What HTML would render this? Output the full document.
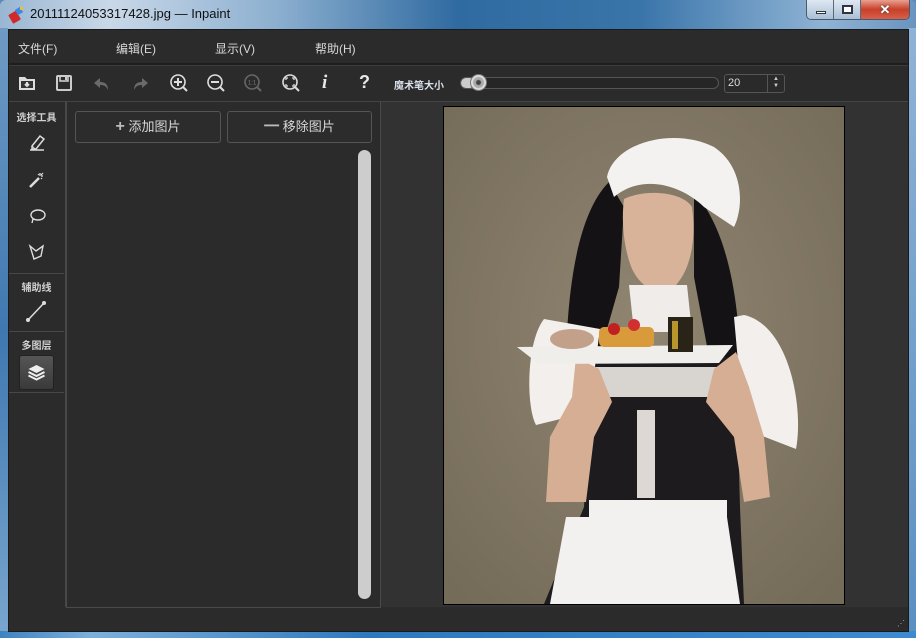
<!DOCTYPE html>
<html><head><meta charset="utf-8">
<style>
*{margin:0;padding:0;box-sizing:border-box}
body{width:916px;height:638px;overflow:hidden;background:#5a8ab8;font-family:"Liberation Sans","Noto Sans CJK SC",sans-serif;position:relative}
.abs{position:absolute}
#title{left:0;top:0;width:916px;height:30px;background:linear-gradient(90deg,#9ab6d2 0%,#c9d8e8 12%,#8db0d0 30%,#2f6aa0 50%,#3a75aa 70%,#8fb3d4 90%,#6a94bf 100%);border-radius:6px 6px 0 0}
#frameL{left:0;top:28px;width:8px;height:610px;background:linear-gradient(180deg,#6f9ac4,#3f78b0 50%,#7aa6cf)}
#frameR{right:0;top:28px;width:8px;height:610px;background:linear-gradient(180deg,#8fb3d6,#5a8fc2)}
#frameB{left:0;top:631px;width:916px;height:7px;background:linear-gradient(90deg,#3d82c0,#7db0dc 10%,#2d79be 40%,#3d8ad0)}
#main{left:8px;top:29px;width:901px;height:603px;background:#2b2b2b;border:1px solid #1a1a1a}
.menu{top:40px;color:#d8d8d8;font-size:12px}
.ico{top:73px;width:20px;height:20px}
.lbl{color:#d0d0d0;font-size:10px;font-weight:bold;left:8px;width:57px;text-align:center}
.sep{left:9px;width:55px;height:1px;background:#474747}
.btn{top:111px;height:32px;border:1px solid #555;border-radius:3px;background:#2c2c2c;color:#d8d8d8;font-size:13px;text-align:center;line-height:30px}
</style></head><body>
<div id="title" class="abs"></div>
<svg class="abs" style="left:8px;top:6px" width="18" height="18" viewBox="0 0 18 18"><rect x="2" y="6" width="9" height="10" rx="1" fill="#d02a2a" transform="rotate(-30 7 11)"/><rect x="8" y="2" width="6" height="6" fill="#3a8ae0" transform="rotate(-30 11 5)"/><rect x="12" y="1" width="3" height="3" fill="#f0c030"/></svg>
<div class="abs" style="left:30px;top:6px;font-size:13px;color:#111">20111124053317428.jpg — Inpaint</div>
<div class="abs" style="left:806px;top:0;width:104px;height:20px;border:1px solid #4a5a6a;border-top:none;border-radius:0 0 5px 5px;overflow:hidden;display:flex">
 <div style="width:27px;height:100%;background:linear-gradient(#dfe8f2,#a9bfd6);border-right:1px solid #5a6a7a;position:relative"><div style="position:absolute;left:9px;top:11px;width:10px;height:3px;background:#fff;border:1px solid #333"></div></div>
 <div style="width:27px;height:100%;background:linear-gradient(#dfe8f2,#a9bfd6);border-right:1px solid #5a6a7a;position:relative"><div style="position:absolute;left:8px;top:5px;width:11px;height:9px;border:2px solid #334;background:#fff"></div></div>
 <div style="flex:1;background:linear-gradient(#e8a090,#c8402a 50%,#d8604a);color:#fff;font-weight:bold;text-align:center;font-size:13px;line-height:19px;text-shadow:0 0 2px #333">✕</div>
</div>
<div id="frameL" class="abs"></div><div id="frameR" class="abs"></div><div id="frameB" class="abs"></div>
<div id="main" class="abs"></div>
<div class="abs menu" style="left:18px">文件(F)</div>
<div class="abs menu" style="left:116px">编辑(E)</div>
<div class="abs menu" style="left:215px">显示(V)</div>
<div class="abs menu" style="left:315px">帮助(H)</div>
<div class="abs" style="left:9px;top:63px;width:899px;height:2px;background:#1e1e1e"></div>
<div class="abs" style="left:9px;top:65px;width:899px;height:1px;background:#3c3c3c"></div>
<svg class="abs ico" style="left:17px" viewBox="0 0 20 20"><path d="M2 4h6l2 2h8v11H2z" fill="#ddd"/><rect x="4" y="8" width="12" height="7" fill="#333"/><path d="M10 9v4M8 11l2 2 2-2" stroke="#ddd" stroke-width="2" fill="none"/></svg>
<svg class="abs ico" style="left:54px" viewBox="0 0 20 20"><rect x="3" y="3" width="14" height="14" rx="1" fill="none" stroke="#ccc" stroke-width="2"/><rect x="6" y="3" width="8" height="5" fill="none" stroke="#ccc" stroke-width="1.6"/><rect x="11" y="4" width="2" height="3" fill="#ccc"/></svg>
<svg class="abs ico" style="left:92px" viewBox="0 0 20 20"><path d="M16 17c0-6-3-8-8-8V5L2 10l6 5v-3c4 0 6 1 8 5z" fill="#6a6a6a"/></svg>
<svg class="abs ico" style="left:130px" viewBox="0 0 20 20"><path d="M4 17c0-6 3-8 8-8V5l6 5-6 5v-3c-4 0-6 1-8 5z" fill="#6a6a6a"/></svg>
<svg class="abs ico" style="left:169px" viewBox="0 0 20 20"><circle cx="9" cy="9" r="7" fill="none" stroke="#ddd" stroke-width="1.6"/><path d="M14 14l4 4M9 5v8M5 9h8" stroke="#ddd" stroke-width="2"/></svg>
<svg class="abs ico" style="left:206px" viewBox="0 0 20 20"><circle cx="9" cy="9" r="7" fill="none" stroke="#ddd" stroke-width="1.6"/><path d="M14 14l4 4M5 9h8" stroke="#ddd" stroke-width="2"/></svg>
<svg class="abs ico" style="left:243px" viewBox="0 0 20 20"><circle cx="9" cy="9" r="7" fill="none" stroke="#666" stroke-width="1.6"/><path d="M14 14l4 4" stroke="#666" stroke-width="2"/><text x="9" y="11.5" font-size="6" fill="#777" text-anchor="middle" font-family="Liberation Sans">1:1</text></svg>
<svg class="abs ico" style="left:281px" viewBox="0 0 20 20"><circle cx="9" cy="9" r="7" fill="none" stroke="#ddd" stroke-width="1.6"/><path d="M14 14l4 4" stroke="#ddd" stroke-width="2"/><path d="M5 7V5h2M11 5h2v2M13 11v2h-2M7 13H5v-2" stroke="#ddd" stroke-width="1.3" fill="none"/></svg>
<div class="abs" style="left:322px;top:72px;font:italic bold 19px 'Liberation Serif',serif;color:#e8e8e8">i</div>
<div class="abs" style="left:359px;top:72px;font:bold 18px 'Liberation Sans',sans-serif;color:#e8e8e8">?</div>
<div class="abs" style="left:394px;top:77px;font-size:10px;font-weight:bold;color:#d8e0ea">魔术笔大小</div>
<div class="abs" style="left:460px;top:77px;width:259px;height:12px;border:1px solid #555;border-radius:6px;background:#262626"></div>
<div class="abs" style="left:461px;top:78px;width:14px;height:10px;border-radius:5px;background:#ccc"></div>
<div class="abs" style="left:470px;top:74px;width:17px;height:17px;border-radius:50%;background:radial-gradient(circle,#444 0 2px,#aaa 3px 5px,#ddd 6px);border:1px solid #777"></div>
<div class="abs" style="left:724px;top:74px;width:61px;height:19px;border:1px solid #555;border-radius:3px;background:#2a2a2a"></div>
<div class="abs" style="left:728px;top:77px;font-size:11px;color:#ddd">20</div>
<div class="abs" style="left:767px;top:75px;width:1px;height:17px;background:#555"></div>
<div class="abs" style="left:773px;top:76px;font-size:6px;color:#ccc;line-height:7px">▲<br>▼</div>
<div class="abs" style="left:9px;top:101px;width:899px;height:1px;background:#444"></div>
<div class="abs" style="left:65px;top:102px;width:1px;height:505px;background:#474747"></div>
<div class="abs lbl" style="top:109px">选择工具</div>
<svg class="abs" style="left:27px;top:132px" width="20" height="20" viewBox="0 0 20 20"><path d="M5 14l8-10 4 3-8 10H5z" fill="none" stroke="#ddd" stroke-width="1.5"/><path d="M5 14l3 3" stroke="#ddd"/><path d="M3 18h14" stroke="#ddd" stroke-width="1.5"/></svg>
<svg class="abs" style="left:27px;top:170px" width="20" height="20" viewBox="0 0 20 20"><path d="M3 17l9-9" stroke="#ddd" stroke-width="2.5"/><path d="M13 3v3M16 6h-2M15 9l-1-1M11 4l1 1M16 3l-2 2" stroke="#ddd" stroke-width="1.2"/></svg>
<svg class="abs" style="left:27px;top:206px" width="20" height="20" viewBox="0 0 20 20"><ellipse cx="11" cy="9" rx="7" ry="5" fill="none" stroke="#ddd" stroke-width="1.4"/><path d="M6 13l-1 4" stroke="#ddd" stroke-width="1.4"/></svg>
<svg class="abs" style="left:27px;top:243px" width="20" height="20" viewBox="0 0 20 20"><path d="M3 3l6 5 7-5-2 10-7 3z" fill="none" stroke="#ddd" stroke-width="1.4"/></svg>
<div class="abs sep" style="top:273px"></div>
<div class="abs lbl" style="top:279px">辅助线</div>
<svg class="abs" style="left:25px;top:300px" width="22" height="22" viewBox="0 0 22 22"><path d="M3 20L19 3" stroke="#ddd" stroke-width="1.5"/><circle cx="3" cy="20" r="2" fill="#ddd"/><circle cx="19" cy="3" r="2" fill="#ddd"/></svg>
<div class="abs sep" style="top:331px"></div>
<div class="abs lbl" style="top:337px">多图层</div>
<div class="abs" style="left:19px;top:355px;width:35px;height:35px;border:1px solid #222;border-radius:3px;background:linear-gradient(#555,#3a3a3a)"></div>
<svg class="abs" style="left:26px;top:362px" width="21" height="21" viewBox="0 0 21 21"><path d="M10.5 3l8 4-8 4-8-4z" fill="#eee"/><path d="M2.5 10l8 4 8-4M2.5 13.5l8 4 8-4" stroke="#eee" stroke-width="2" fill="none"/></svg>
<div class="abs sep" style="top:392px"></div>
<div class="abs" style="left:66px;top:102px;width:315px;height:506px;border:1px solid #4a4a4a;border-top:none;background:#2b2b2b"></div>
<div class="abs btn" style="left:75px;width:146px"><b style="font-size:16px;color:#bbb">+</b> 添加图片</div>
<div class="abs btn" style="left:227px;width:145px"><b style="font-size:15px;color:#bbb">━</b> 移除图片</div>
<div class="abs" style="left:358px;top:150px;width:13px;height:449px;border-radius:7px;background:#cdcdcd"></div>
<div class="abs" style="left:381px;top:102px;width:527px;height:505px;background:#323232"></div>
<svg class="abs" style="left:443px;top:106px" width="402" height="499" viewBox="-1 -1 402 499">
<defs><radialGradient id="bg" cx="50%" cy="45%" r="70%"><stop offset="0" stop-color="#8f8571"/><stop offset="1" stop-color="#756b59"/></radialGradient></defs>
<rect x="-1" y="-1" width="402" height="499" fill="#000"/>
<rect x="0" y="0" width="400" height="497" fill="url(#bg)"/>
<!-- hair -->
<path d="M165 75 C130 110 120 200 122 300 L126 335 L150 330 L155 250 L175 180 L180 100 Z" fill="#141214"/>
<path d="M250 85 C290 130 300 220 296 320 L285 335 L265 250 L250 170 Z" fill="#141214"/>
<!-- bodice -->
<path d="M150 250 L292 250 L296 400 L300 497 L100 497 L140 400 Z" fill="#1e1b1e"/>
<!-- sleeves -->
<path d="M100 212 C82 235 82 300 92 318 L145 305 L156 222 Z" fill="#f2efec"/>
<path d="M290 210 L300 208 C345 218 360 300 352 342 L300 322 Z" fill="#f2efec"/>
<!-- headpiece -->
<path d="M163 70 C170 35 230 20 270 40 C300 60 300 100 290 120 L260 100 C240 80 200 65 170 90 Z" fill="#f4f2f0"/>
<!-- face -->
<path d="M180 92 C200 82 238 84 248 100 C252 130 248 160 232 178 C215 190 198 182 188 162 C180 142 177 115 180 92 Z" fill="#d8b39a"/>
<!-- collar -->
<path d="M185 178 L243 178 L248 225 L190 225 Z" fill="#efecea"/>
<path d="M140 260 L290 260 L280 290 L150 290 Z" fill="#d8d4d0"/>
<!-- arms -->
<path d="M132 250 L155 262 L168 295 L150 330 L142 395 L102 395 L106 330 L128 290 Z" fill="#d5ae94"/>
<path d="M292 245 L270 262 L262 295 L290 330 L300 395 L326 390 L320 330 L305 280 Z" fill="#d5ae94"/>
<!-- lace -->
<rect x="193" y="303" width="18" height="88" fill="#ddd8d4"/>
<!-- tray & food -->
<path d="M73 240 L289 238 L275 256 L95 257 Z" fill="#f0eeeb"/>
<ellipse cx="128" cy="232" rx="22" ry="10" fill="#c2a08a"/>
<rect x="155" y="220" width="55" height="20" rx="5" fill="#d89a3a"/>
<circle cx="170" cy="222" r="6" fill="#c02020"/><circle cx="190" cy="218" r="6" fill="#d03030"/>
<rect x="224" y="210" width="25" height="35" fill="#2a2418"/><rect x="228" y="214" width="6" height="28" fill="#b8962c"/>
<!-- apron -->
<path d="M145 393 L283 393 L283 410 L296 497 L106 497 L122 410 L145 410 Z" fill="#f3f1ef"/>
</svg>
<div class="abs" style="left:897px;top:619px;font-size:8px;color:#aaa;letter-spacing:-1px">⋰</div>
</body></html>
